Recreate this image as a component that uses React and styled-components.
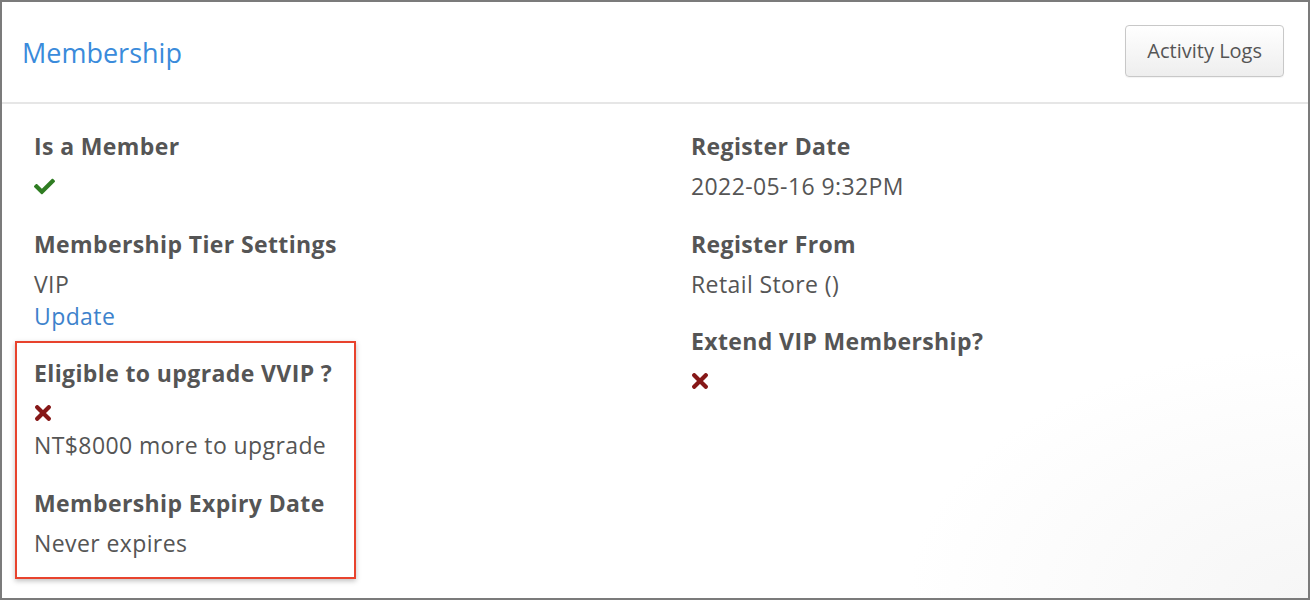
import React from "react";
import styled, { createGlobalStyle } from "styled-components";
import { FaCheck } from "react-icons/fa";

const Global = createGlobalStyle`
  html, body { margin: 0; padding: 0; background: #fff; }
  body { font-family: "Open Sans", "Liberation Sans", sans-serif; }
  * { box-sizing: border-box; }
`;

const Frame = styled.div`
  width: 1310px;
  height: 600px;
  border: 2px solid #7b7b7b;
  background: radial-gradient(ellipse 400px 250px at 100% 100%, #f6f6f6 0%, #ffffff 100%);
  overflow: hidden;
`;

const Header = styled.div`
  height: 102px;
  display: flex;
  align-items: center;
  justify-content: space-between;
  padding: 0 24px 0 20px;
  border-bottom: 2px solid #e6e6e6;
`;

const Title = styled.h2`
  margin: 0;
  font-size: 27px;
  font-weight: 400;
  color: #3a8bdb;
`;

const Button = styled.button`
  height: 52px;
  margin-bottom: 3px;
  padding: 0 21px;
  font-family: inherit;
  font-size: 20px;
  color: #555;
  background: linear-gradient(#ffffff, #eeeeee);
  border: 1px solid #c8c8c8;
  border-radius: 4px;
  box-shadow: 0 1px 1px rgba(0,0,0,0.05);
`;

const Body = styled.div`
  display: grid;
  grid-template-columns: 585px 585px;
  column-gap: 72px;
  padding: 26px 32px 0;
`;

const Column = styled.div`
  display: flex;
  flex-direction: column;
`;

const Field = styled.div`
  margin-bottom: ${(p) => p.$gap ?? 26}px;
  &:last-child { margin-bottom: 0; }
`;

const Label = styled.div`
  font-size: 23px;
  letter-spacing: 0.38px;
  font-weight: 700;
  line-height: 32px;
  color: #555;
  margin-bottom: 8px;
`;

const Value = styled.div`
  font-size: 23px;
  letter-spacing: 0.4px;
  line-height: 32px;
  color: #555;
`;

const Link = styled.a`
  display: block;
  font-size: 23px;
  letter-spacing: 0.4px;
  line-height: 32px;
  color: #3d82cc;
  text-decoration: none;
`;

const IconLine = styled.div`
  height: 32px;
  display: flex;
  align-items: center;
  color: ${(p) => (p.$ok ? "#2f7d22" : "#861818")};
  font-size: 21px;
  padding-left: ${(p) => (p.$ok ? "0" : "1px")};
`;

const Highlight = styled.div`
  margin: 0 0 0 -19px;
  width: 341px;
  padding: 14px 17px 18px;
  border: 2px solid #e8432d;
  box-shadow: 0 2px 5px rgba(0,0,0,0.25);
`;

const Cross = () => (
  <svg width="16" height="16" viewBox="0 0 16 16" aria-hidden="true">
    <path
      d="M2.2 2.2 L13.8 13.8 M13.8 2.2 L2.2 13.8"
      stroke="currentColor"
      strokeWidth="4.2"
      strokeLinecap="round"
      fill="none"
    />
  </svg>
);

export default function App() {
  return (
    <>
      <Global />
      <Frame>
        <Header>
          <Title>Membership</Title>
          <Button>Activity Logs</Button>
        </Header>
        <Body>
          <Column>
            <Field>
              <Label>Is a Member</Label>
              <IconLine $ok><FaCheck /></IconLine>
            </Field>
            <Field $gap={9}>
              <Label>Membership Tier Settings</Label>
              <Value>VIP</Value>
              <Link href="#">Update</Link>
            </Field>
            <Highlight>
              <Field>
                <Label>Eligible to upgrade VVIP ?</Label>
                <IconLine><Cross /></IconLine>
                <Value>NT$8000 more to upgrade</Value>
              </Field>
              <Field>
                <Label>Membership Expiry Date</Label>
                <Value>Never expires</Value>
              </Field>
            </Highlight>
          </Column>
          <Column>
            <Field>
              <Label>Register Date</Label>
              <Value>2022-05-16 9:32PM</Value>
            </Field>
            <Field $gap={25}>
              <Label>Register From</Label>
              <Value>Retail Store ()</Value>
            </Field>
            <Field>
              <Label>Extend VIP Membership?</Label>
              <IconLine><Cross /></IconLine>
            </Field>
          </Column>
        </Body>
      </Frame>
    </>
  );
}
